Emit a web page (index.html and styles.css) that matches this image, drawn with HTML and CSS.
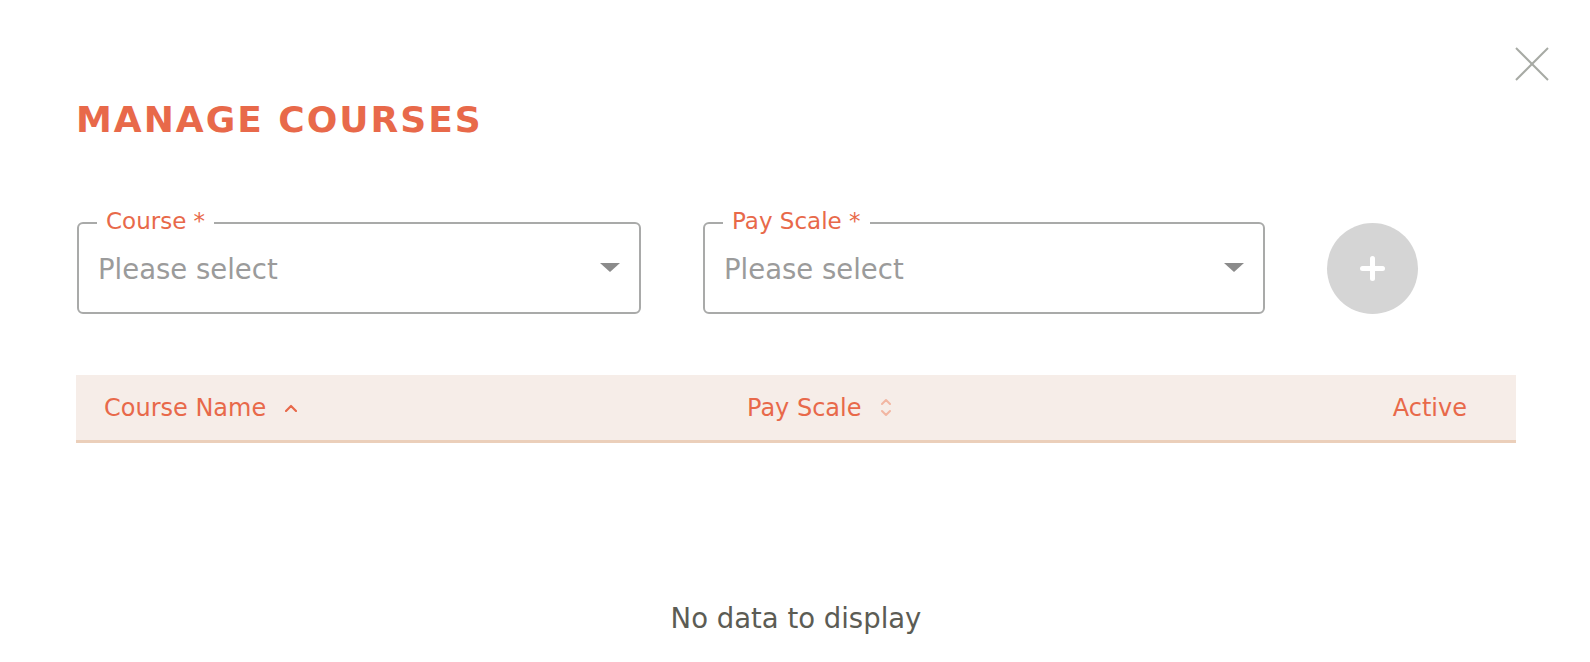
FILE: index.html
```html
<!DOCTYPE html>
<html lang="en">
  <head>
    <meta http-equiv="Content-Type" content="text/html;charset=UTF-8" />
    <meta name="viewport" content="width=device-width, initial-scale=1.0" />
    <title>Manage Courses</title>
    <link rel="stylesheet" href="styles.css">
  </head>
  <body>
    <div class="dialog">
      <button class="closeButton" type="button" aria-label="Close">
        <svg width="34" height="34" viewBox="0 0 34 34">
          <line x1="1" y1="1" x2="33" y2="33" />
          <line x1="33" y1="1" x2="1" y2="33" />
        </svg>
      </button>

      <h1 class="dialogTitle">MANAGE COURSES</h1>

      <form class="courseForm">
        <fieldset class="selectField selectCourse">
          <legend>Course *</legend>
          <div class="selectValue">
            <span class="placeholder">Please select</span>
            <span class="selectArrow"></span>
          </div>
        </fieldset>

        <fieldset class="selectField selectPayScale">
          <legend>Pay Scale *</legend>
          <div class="selectValue">
            <span class="placeholder">Please select</span>
            <span class="selectArrow"></span>
          </div>
        </fieldset>

        <button class="addButton" type="button" aria-label="Add">
          <svg width="25" height="25" viewBox="0 0 25 25">
            <line x1="2.5" y1="12.5" x2="22.5" y2="12.5" />
            <line x1="12.5" y1="2.5" x2="12.5" y2="22.5" />
          </svg>
        </button>
      </form>

      <div class="courseTable">
        <div class="tableHead">
          <div class="headCell">
            Course Name
            <svg class="sortIcon" width="12" height="8" viewBox="0 0 12 8">
              <polyline points="1,7 6,2 11,7" />
            </svg>
          </div>
          <div class="headCell">
            Pay Scale
            <svg class="sortIcon sortIdle" width="10" height="19" viewBox="0 0 10 19">
              <polyline points="1,6 5,2 9,6" />
              <polyline points="1,13 5,17 9,13" />
            </svg>
          </div>
          <div class="headCell headRight">Active</div>
        </div>
        <div class="tableEmpty">No data to display</div>
      </div>
    </div>
  </body>
</html>
```

FILE: styles.css
```css
/* Dasar halaman */
body {
  margin: 0;
  background-color: #fff;
  font-family: "DejaVu Sans", sans-serif;
}

.dialog {
  position: relative;
  padding: 98px 74px 0 76px;
}

/* Tombol tutup */
.closeButton {
  position: absolute;
  top: 47px;
  right: 41px;
  width: 34px;
  height: 34px;
  padding: 0;
  border: none;
  background: none;
  cursor: pointer;
}

.closeButton svg {
  display: block;
}

.closeButton line {
  stroke: #a7aaa4;
  stroke-width: 2;
}

.dialogTitle {
  margin: 0;
  font-size: 36px;
  line-height: 44px;
  font-weight: 700;
  letter-spacing: 2px;
  color: #e8694a;
}

/* Form pilihan */
.courseForm {
  display: flex;
  align-items: flex-end;
  gap: 62px;
  margin-top: 67px;
  padding-left: 1px;
}

.selectField {
  box-sizing: border-box;
  margin: 0;
  min-width: 0;
  padding: 15px 19px 26px 19px;
  border: 2px solid #a9aaa9;
  border-radius: 6px;
}

.selectCourse {
  width: 564px;
}

.selectPayScale {
  width: 562px;
}

.selectField legend {
  margin-left: -1px;
  padding: 0 9px 4px;
  font-size: 23px;
  line-height: 24px;
  color: #e8694a;
}

.selectValue {
  display: flex;
  justify-content: space-between;
  align-items: center;
  height: 34px;
}

.placeholder {
  font-size: 27.5px;
  line-height: 34px;
  color: #9b9b9b;
}

.selectArrow {
  width: 0;
  height: 0;
  margin-bottom: 3px;
  border-left: 10px solid transparent;
  border-right: 10px solid transparent;
  border-top: 9px solid #8b8b8b;
}

.addButton {
  display: flex;
  justify-content: center;
  align-items: center;
  flex-shrink: 0;
  width: 91px;
  height: 91px;
  padding: 0;
  border: none;
  border-radius: 50%;
  background-color: #d5d5d5;
  cursor: pointer;
}

.addButton line {
  stroke: #fff;
  stroke-width: 5;
  stroke-linecap: round;
}

/* Tabel kursus */
.courseTable {
  margin-top: 61px;
}

.tableHead {
  display: grid;
  grid-template-columns: 643px 1fr auto;
  align-items: center;
  height: 65px;
  padding: 0 49px 0 28px;
  background-color: #f6ede8;
  border-bottom: 3px solid #ebcfba;
}

.headCell {
  display: flex;
  align-items: center;
  font-size: 24px;
  line-height: 28px;
  color: #e8694a;
}

.headRight {
  justify-content: flex-end;
}

.sortIcon {
  margin-left: 19px;
  fill: none;
  stroke: #e8694a;
  stroke-width: 2.2;
  stroke-linecap: round;
  stroke-linejoin: round;
}

.sortIdle {
  stroke: #f2b6a2;
  stroke-width: 2;
}

.tableEmpty {
  padding-top: 159px;
  text-align: center;
  font-size: 27.5px;
  line-height: 32px;
  color: #5c5c54;
}
```
